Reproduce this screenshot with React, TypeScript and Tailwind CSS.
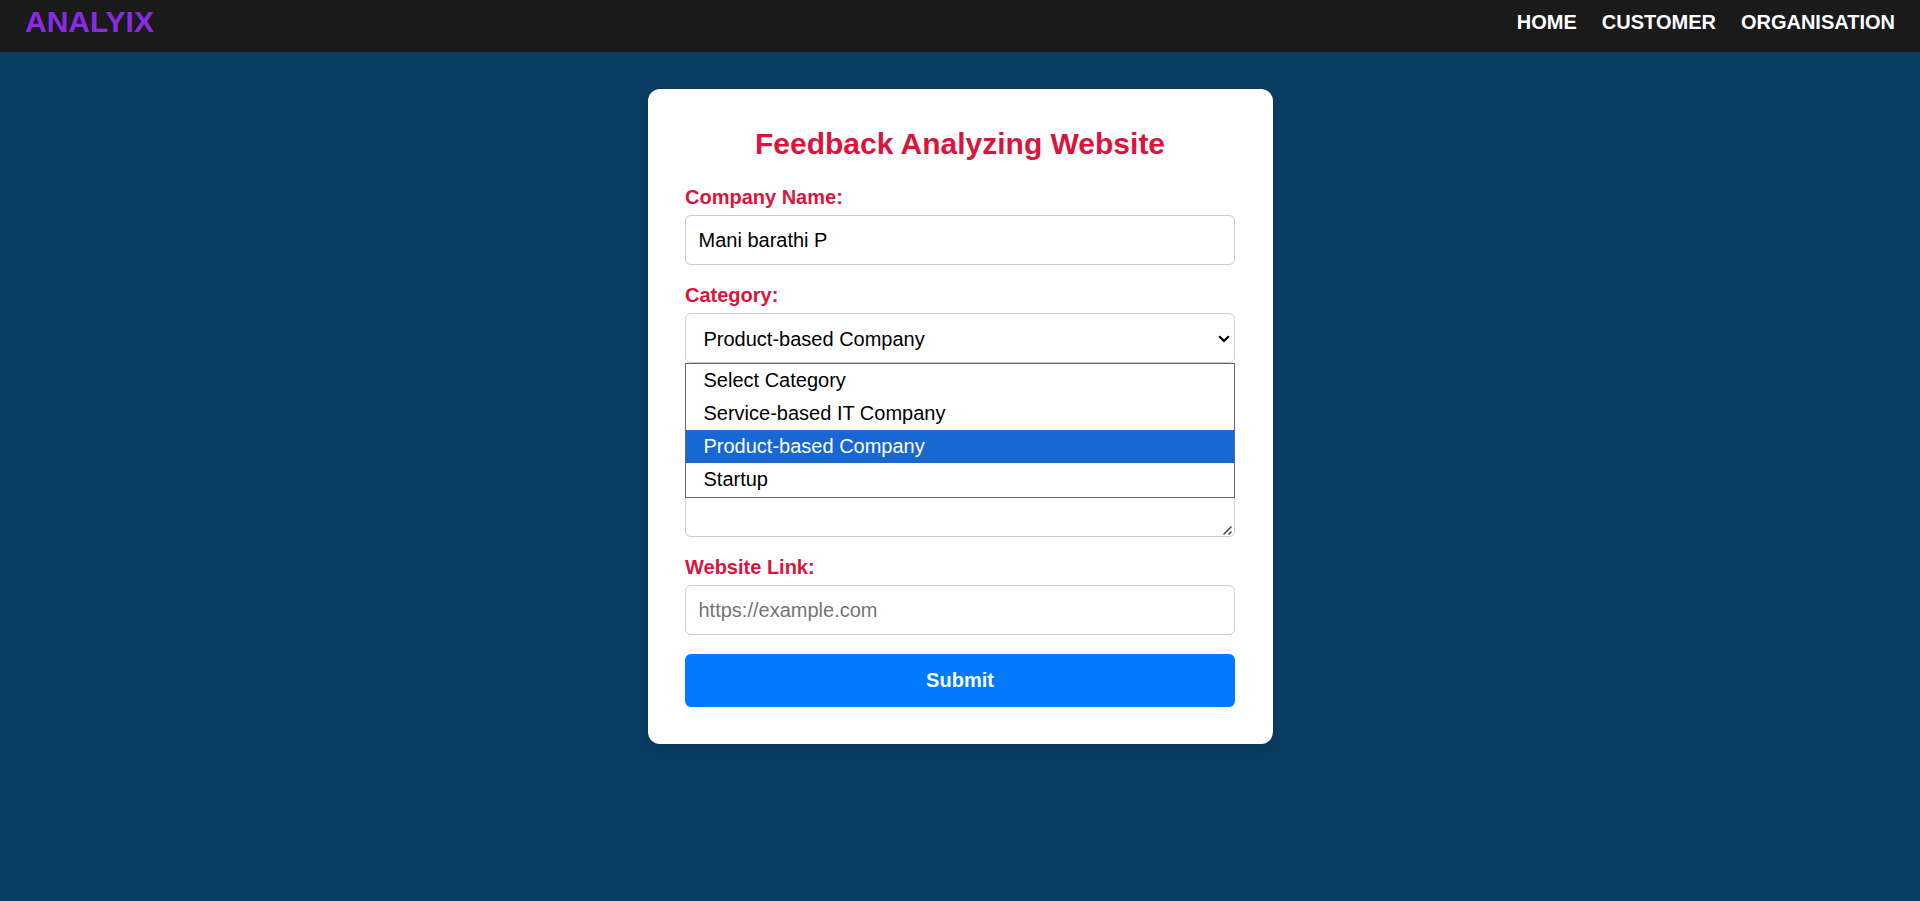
import React, { useState } from "react";

const OPTIONS = [
  "Select Category",
  "Service-based IT Company",
  "Product-based Company",
  "Startup",
];

const LINKS = ["HOME", "CUSTOMER", "ORGANISATION"];

function Label({ children }: { children: React.ReactNode }) {
  return (
    <label className="mb-[6px] block h-[23px] text-[20px] leading-[23px] font-bold text-[#dc143c]">
      {children}
    </label>
  );
}

export default function App() {
  const [selected, setSelected] = useState("Product-based Company");
  const field =
    "block w-full rounded-[6px] border border-[#ccc] bg-white text-[20px] leading-[23px] text-black outline-none";

  return (
    <div className="flex h-[901px] flex-col overflow-hidden bg-[#0a3d62] font-['Liberation_Sans',Arial,sans-serif]">
      <nav className="flex h-[52px] shrink-0 items-start justify-between bg-[#1a1a1a] px-[25px]">
        <div className="pt-[5px] text-[30px] leading-[34px] font-bold text-[#8a2be2]">ANALYIX</div>
        <ul className="flex gap-[25px] pt-[11px]">
          {LINKS.map((link) => (
            <li key={link} className="text-[20px] leading-[23px] font-bold text-white">
              {link}
            </li>
          ))}
        </ul>
      </nav>

      <main className="mx-auto mt-[37px] flex h-[655px] w-[625px] flex-col rounded-[12px] bg-white px-[37.5px] pt-[37px] shadow-[0_5px_12px_rgba(0,0,0,0.1)]">
        <h2 className="mb-[25px] text-center text-[30px] leading-[35px] font-bold text-[#dc143c]">
          Feedback Analyzing Website
        </h2>

        <Label>Company Name:</Label>
        <input className={`${field} mb-[19px] h-[50px] px-[12.5px]`} defaultValue="Mani barathi P" />

        <Label>Category:</Label>
        <div className="relative mb-[19px]">
          <div className={`${field} flex h-[50px] items-center justify-between pt-px pr-[4px] pl-[17.5px]`}>
            <span className="pt-px">{selected}</span>
            <svg width="12" height="8" viewBox="0 0 12 8" fill="none" stroke="black" strokeWidth="2.3">
              <path d="M1.2 1.3 L6 6 L10.8 1.3" />
            </svg>
          </div>
          <ul className="absolute top-[50px] left-0 z-10 h-[135px] w-full border border-[#666] bg-white">
            {OPTIONS.map((option) => (
              <li
                key={option}
                onClick={() => setSelected(option)}
                className={`h-[33px] pl-[17.5px] text-[20px] leading-[33px] ${
                  option === selected ? "bg-[#1967d2] text-white" : "text-black"
                }`}
              >
                {option}
              </li>
            ))}
          </ul>
        </div>

        <div className="relative mt-[30px] mb-[19px]">
          <textarea className={`${field} h-[125px] resize-none p-[12px]`} />
          <svg
            className="absolute right-[3px] bottom-[2px]"
            width="9"
            height="9"
            viewBox="0 0 9 9"
            fill="none"
            stroke="#444"
            strokeWidth="1.5"
          >
            <path d="M0.5 8.5 L8.5 0.5 M5.5 8.5 L8.5 5.5" />
          </svg>
        </div>

        <Label>Website Link:</Label>
        <input
          className={`${field} mb-[19px] h-[50px] px-[12.5px] placeholder:text-[#757575]`}
          placeholder="https://example.com"
        />

        <button className="h-[53px] w-full rounded-[6px] bg-[#007bff] text-[20px] leading-[23px] font-bold text-white">
          Submit
        </button>
      </main>
    </div>
  );
}
